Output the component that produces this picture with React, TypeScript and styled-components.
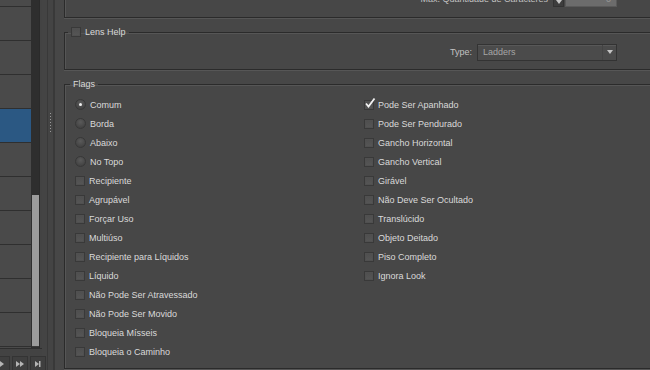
import React from "react";
import styled, { createGlobalStyle } from "styled-components";

const GlobalStyle = createGlobalStyle`
  html, body {
    margin: 0;
    padding: 0;
    background: #474747;
  }
  body {
    font-family: "Liberation Sans", Arial, sans-serif;
  }
`;

const Window = styled.div`
  display: flex;
  width: 650px;
  height: 370px;
  overflow: hidden;
  background: #474747;
  color: #dadada;
  font-family: "Liberation Sans", Arial, sans-serif;
  font-size: 9px;
`;

/* ---------- left list ---------- */

const LeftPane = styled.div`
  width: 42px;
  flex-shrink: 0;
  display: flex;
  flex-direction: column;
  background: #434343;
`;

const ListArea = styled.div`
  height: 348px;
  display: flex;
  overflow: hidden;
`;

const ItemList = styled.div`
  width: 31px;
  display: flex;
  flex-direction: column;
  margin-top: -27px;
`;

const ListRow = styled.div<{ $selected?: boolean }>`
  height: 33px;
  flex-shrink: 0;
  border-bottom: 1px solid #2f2f2f;
  background: ${p => (p.$selected ? "#2b5883" : "#4a4a4a")};
`;

const ScrollTrack = styled.div`
  width: 8px;
  padding-top: 195px;
  display: flex;
  flex-direction: column;
  background: #2e2e2e;
  border-right: 1px solid #2a2a2a;
`;

const ScrollThumb = styled.div`
  flex: 1;
  margin: 0 0 1px 1px;
  background: #9b9b9b;
  border-bottom: 1px solid #3a3a3a;
`;

const NavBar = styled.div`
  flex: 1;
  display: flex;
  align-items: flex-end;
  gap: 2px;
  margin-left: -6px;
  border-top: 1px solid #2e2e2e;
  position: relative;
  z-index: 1;
`;

const NavButton = styled.div`
  width: 14px;
  height: 13px;
  flex-shrink: 0;
  display: flex;
  align-items: center;
  justify-content: center;
  background: #3f3f3f;
  border: 1px solid #343434;
  border-bottom: none;
  color: #b5b5b5;
`;

const Splitter = styled.div`
  width: 13px;
  flex-shrink: 0;
  display: flex;
  background: #444444;
  border-right: 2px solid #393939;
  box-sizing: border-box;
`;

const SplitterRail = styled.div`
  margin-left: 5px;
  flex: 1;
  display: flex;
  justify-content: center;
  padding-top: 113px;
  border-left: 1px solid #393939;
`;

const Grip = styled.div`
  width: 1px;
  height: 20px;
  background: repeating-linear-gradient(
    to bottom,
    #9a9a9a 0 1px,
    transparent 1px 3px
  );
`;

/* ---------- right panel ---------- */

const RightPane = styled.div`
  flex: 1;
  padding-left: 9px;
  overflow: hidden;
`;

const ScrolledContent = styled.div`
  width: 606px;
  margin-top: -14px;
  display: flex;
  flex-direction: column;
  gap: 8px;
`;

const GroupBox = styled.fieldset<{ $padTop: number; $padBottom: number }>`
  margin: 0;
  min-width: 0;
  padding: ${p => p.$padTop}px 52px ${p => p.$padBottom}px 10px;
  border: 1px solid #2b2b2b;
  box-shadow: inset 1px 1px 0 #565656, 0 1px 0 #565656;
`;

const Legend = styled.legend<{ $inset: number }>`
  display: flex;
  align-items: center;
  gap: 4px;
  height: 12px;
  margin-left: ${p => p.$inset}px;
  padding: 0 3px;
  color: #dadada;
  font-size: 9px;
`;

const FieldRow = styled.div`
  display: flex;
  justify-content: flex-end;
  align-items: center;
  height: 16px;
`;

const FieldLabel = styled.span`
  color: #c2c2c2;
  margin-right: 5px;
`;

const SpinButton = styled.div`
  width: 11px;
  height: 16px;
  display: flex;
  align-items: flex-end;
  justify-content: center;
  padding-bottom: 2px;
  box-sizing: border-box;
  background: #3d3d3d;
  border: 1px solid #333;
  margin-right: 1px;
`;

const SpinInput = styled.div`
  width: 52px;
  height: 16px;
  box-sizing: border-box;
  display: flex;
  align-items: center;
  justify-content: flex-end;
  padding-right: 5px;
  background: #6c6c6c;
  border: 1px solid #5a5a5a;
  color: #9a9a9a;
`;

const Select = styled.div`
  width: 140px;
  height: 17px;
  box-sizing: border-box;
  display: flex;
  align-items: center;
  padding-left: 5px;
  background: #4b4b4b;
  border: 1px solid #333;
  box-shadow: inset 0 1px 0 #585858;
  color: #a6a6a6;
`;

const SelectText = styled.span`
  flex: 1;
`;

const SelectArrow = styled.div`
  width: 13px;
  height: 100%;
  display: flex;
  align-items: center;
  justify-content: center;
  border-left: 1px solid #444;
`;

const FlagColumns = styled.div`
  display: flex;
`;

const FlagColumn = styled.div<{ $width?: number }>`
  display: flex;
  flex-direction: column;
  width: ${p => (p.$width ? `${p.$width}px` : "auto")};
`;

const FlagRow = styled.label`
  display: flex;
  align-items: center;
  gap: 4px;
  height: 19px;
  white-space: nowrap;
`;

const Box = styled.span`
  position: relative;
  width: 8px;
  height: 8px;
  flex-shrink: 0;
  background: linear-gradient(#4e4e4e, #565656);
  border: 1px solid #393939;
  box-shadow: inset 0 0 0 1px #505050;
`;

const Tick = styled.svg`
  position: absolute;
  left: -1px;
  top: -4px;
`;

const Radio = styled.span<{ $on?: boolean }>`
  width: 9px;
  height: 9px;
  flex-shrink: 0;
  border-radius: 50%;
  display: flex;
  align-items: center;
  justify-content: center;
  background: radial-gradient(circle at 50% 35%, #5a5a5a, #3b3b3b);
  border: 1px solid #383838;
  &::after {
    content: "";
    width: 3px;
    height: 3px;
    border-radius: 50%;
    background: ${p => (p.$on ? "#f0f0f0" : "transparent")};
  }
`;

const CheckBox: React.FC<{ checked?: boolean }> = ({ checked }) => (
  <Box>
    {checked && (
      <Tick width="12" height="12" viewBox="0 0 12 12">
        <polyline
          points="2,6.5 4.5,9.5 10.5,1.5"
          fill="none"
          stroke="#f2f2f2"
          strokeWidth="1.8"
        />
      </Tick>
    )}
  </Box>
);

const leftFlags: { label: string; radio?: boolean; on?: boolean }[] = [
  { label: "Comum", radio: true, on: true },
  { label: "Borda", radio: true },
  { label: "Abaixo", radio: true },
  { label: "No Topo", radio: true },
  { label: "Recipiente" },
  { label: "Agrupável" },
  { label: "Forçar Uso" },
  { label: "Multiúso" },
  { label: "Recipiente para Líquidos" },
  { label: "Líquido" },
  { label: "Não Pode Ser Atravessado" },
  { label: "Não Pode Ser Movido" },
  { label: "Bloqueia Mísseis" },
  { label: "Bloqueia o Caminho" },
];

const rightFlags: { label: string; on?: boolean }[] = [
  { label: "Pode Ser Apanhado", on: true },
  { label: "Pode Ser Pendurado" },
  { label: "Gancho Horizontal" },
  { label: "Gancho Vertical" },
  { label: "Girável" },
  { label: "Não Deve Ser Ocultado" },
  { label: "Translúcido" },
  { label: "Objeto Deitado" },
  { label: "Piso Completo" },
  { label: "Ignora Look" },
];

const Play = ({ count, bar }: { count: number; bar?: boolean }) => {
  const w = count * 4 + (bar ? 2 : 0);
  return (
    <svg width={w} height="6" viewBox={`0 0 ${w} 6`}>
      {Array.from({ length: count }).map((_, i) => (
        <polygon key={i} points={`${i * 4},0 ${i * 4 + 4},3 ${i * 4},6`} fill="currentColor" />
      ))}
      {bar && <rect x={count * 4} y="0" width="1.5" height="6" fill="currentColor" />}
    </svg>
  );
};

const Triangle = () => (
  <svg width="6" height="4" viewBox="0 0 6 4">
    <polygon points="0,0 6,0 3,4" fill="#c4c4c4" />
  </svg>
);

export default function App() {
  return (
    <>
      <GlobalStyle />
      <Window>
        <LeftPane>
          <ListArea>
            <ItemList>
              {Array.from({ length: 12 }).map((_, i) => (
                <ListRow key={i} $selected={i === 4} />
              ))}
            </ItemList>
            <ScrollTrack>
              <ScrollThumb />
            </ScrollTrack>
          </ListArea>
          <NavBar>
            <NavButton><Play count={1} /></NavButton>
            <NavButton><Play count={2} /></NavButton>
            <NavButton><Play count={1} bar /></NavButton>
          </NavBar>
        </LeftPane>

        <Splitter>
          <SplitterRail>
            <Grip />
          </SplitterRail>
        </Splitter>

        <RightPane>
          <ScrolledContent>
            <GroupBox $padTop={4} $padBottom={10}>
              <FieldRow>
                <FieldLabel>Max. Quantidade de Caracteres</FieldLabel>
                <SpinButton><Triangle /></SpinButton>
                <SpinInput>0</SpinInput>
              </FieldRow>
            </GroupBox>

            <GroupBox $padTop={6} $padBottom={9}>
              <Legend $inset={-7}>
                <CheckBox />
                Lens Help
              </Legend>
              <FieldRow>
                <FieldLabel>Type:</FieldLabel>
                <Select>
                  <SelectText>Ladders</SelectText>
                  <SelectArrow><Triangle /></SelectArrow>
                </Select>
              </FieldRow>
            </GroupBox>

            <GroupBox $padTop={5} $padBottom={7}>
              <Legend $inset={-5}>Flags</Legend>
              <FlagColumns>
                <FlagColumn $width={289}>
                  {leftFlags.map(f => (
                    <FlagRow key={f.label}>
                      {f.radio ? <Radio $on={f.on} /> : <CheckBox checked={f.on} />}
                      {f.label}
                    </FlagRow>
                  ))}
                </FlagColumn>
                <FlagColumn>
                  {rightFlags.map(f => (
                    <FlagRow key={f.label}>
                      <CheckBox checked={f.on} />
                      {f.label}
                    </FlagRow>
                  ))}
                </FlagColumn>
              </FlagColumns>
            </GroupBox>
          </ScrolledContent>
        </RightPane>
      </Window>
    </>
  );
}
